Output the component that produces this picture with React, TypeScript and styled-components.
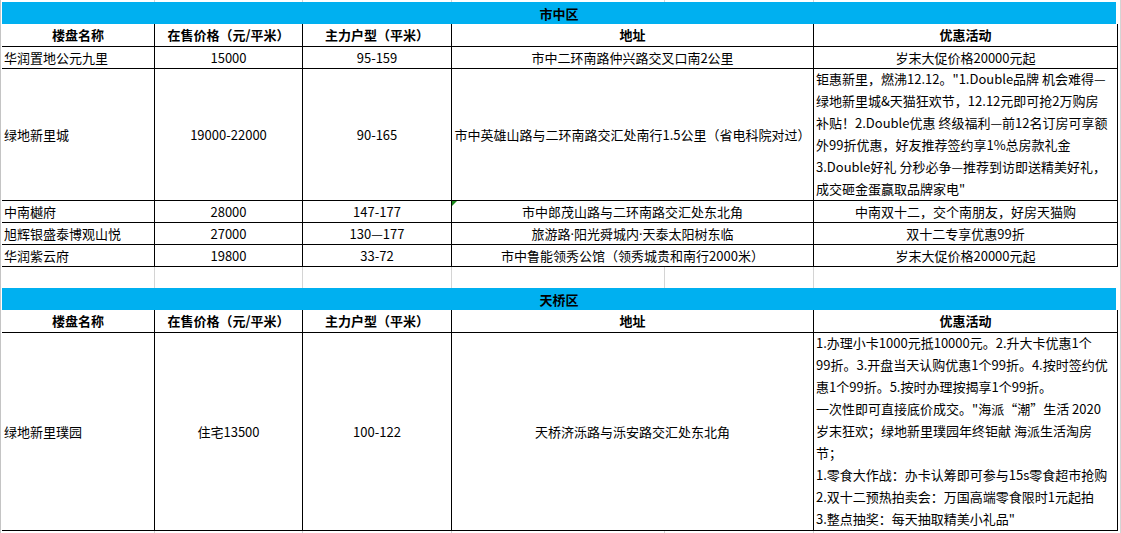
import * as React from "react";
import styled, { createGlobalStyle } from "styled-components";

const GlobalStyle = createGlobalStyle`
  html, body {
    margin: 0;
    padding: 0;
    background: #fff;
  }
  body {
    font-family: "Noto Sans CJK SC", "Noto Sans", sans-serif;
    font-size: 13px;
    color: #000;
  }
`;

type Row = {
  name: string;
  price: string;
  size: string;
  address: string;
  promo: string[];
  height: number;
  marker?: boolean;
};

const shizhong: Row[] = [
  {
    name: "华润置地公元九里",
    price: "15000",
    size: "95-159",
    address: "市中二环南路仲兴路交叉口南2公里",
    promo: ["岁末大促价格20000元起"],
    height: 22,
  },
  {
    name: "绿地新里城",
    price: "19000-22000",
    size: "90-165",
    address: "市中英雄山路与二环南路交汇处南行1.5公里（省电科院对过）",
    promo: [
      "钜惠新里，燃沸12.12。\"1.Double品牌 机会难得—",
      "绿地新里城&天猫狂欢节，12.12元即可抢2万购房",
      "补贴！2.Double优惠 终级福利—前12名订房可享额",
      "外99折优惠，好友推荐签约享1%总房款礼金",
      "3.Double好礼 分秒必争—推荐到访即送精美好礼，",
      "成交砸金蛋赢取品牌家电\"",
    ],
    height: 132,
  },
  {
    name: "中南樾府",
    price: "28000",
    size: "147-177",
    address: "市中郎茂山路与二环南路交汇处东北角",
    promo: ["中南双十二，交个南朋友，好房天猫购"],
    height: 22,
    marker: true,
  },
  {
    name: "旭辉银盛泰博观山悦",
    price: "27000",
    size: "130—177",
    address: "旅游路·阳光舜城内·天泰太阳树东临",
    promo: ["双十二专享优惠99折"],
    height: 22,
  },
  {
    name: "华润紫云府",
    price: "19800",
    size: "33-72",
    address: "市中鲁能领秀公馆（领秀城贵和南行2000米）",
    promo: ["岁末大促价格20000元起"],
    height: 22,
  },
];

const tianqiao: Row[] = [
  {
    name: "绿地新里璞园",
    price: "住宅13500",
    size: "100-122",
    address: "天桥济泺路与泺安路交汇处东北角",
    promo: [
      "1.办理小卡1000元抵10000元。2.升大卡优惠1个",
      "99折。3.开盘当天认购优惠1个99折。4.按时签约优",
      "惠1个99折。5.按时办理按揭享1个99折。",
      "一次性即可直接底价成交。\"海派“潮”生活 2020",
      "岁末狂欢；绿地新里璞园年终钜献 海派生活淘房",
      "节；",
      "1.零食大作战：办卡认筹即可参与15s零食超市抢购",
      "2.双十二预热拍卖会：万国高端零食限时1元起拍",
      "3.整点抽奖：每天抽取精美小礼品\"",
    ],
    height: 198,
  },
];

const headers = ["楼盘名称", "在售价格（元/平米）", "主力户型（平米）", "地址", "优惠活动"];

const Sheet = styled.div`
  width: 1121px;
  height: 533px;
  box-sizing: border-box;
  border-left: 1px solid #c4c4c4;
  border-right: 1px solid #d4d4d4;
  padding-left: 1px;
  overflow: hidden;
  background: #fff;
`;

const GapRow = styled.div<{ $h: number }>`
  display: grid;
  grid-template-columns: 153px 148px 149px 213px 149px 304px;
  height: ${(p) => p.$h}px;
`;

const GapCell = styled.div<{ $last?: boolean }>`
  box-sizing: border-box;
  border-right: ${(p) => (p.$last ? "none" : "1px solid #d4d4d4")};
`;

const Table = styled.div<{ $rows: string }>`
  display: grid;
  grid-template-columns: 153px 148px 149px 362px 304px;
  grid-template-rows: ${(p) => p.$rows};
`;

const Band = styled.div`
  grid-column: 1 / -1;
  margin-right: 2px;
  background: #00b0f0;
  font-weight: 700;
  display: flex;
  align-items: center;
  justify-content: center;
`;

const Cell = styled.div<{ $align?: "left" | "center"; $head?: boolean }>`
  position: relative;
  box-sizing: border-box;
  border-right: 1px solid #000;
  border-bottom: 1px solid #000;
  display: flex;
  align-items: center;
  justify-content: ${(p) => (p.$align === "left" ? "flex-start" : "center")};
  padding: 0 2px;
  white-space: nowrap;
  overflow: hidden;
  font-weight: ${(p) => (p.$head ? 700 : 400)};
  line-height: 20px;
`;

const PromoLines = styled.div`
  align-self: stretch;
  display: flex;
  flex-direction: column;
  justify-content: center;
  line-height: 22px;
  padding-bottom: 1px;
`;

// narrow latin middle dot, as in the sheet
const Dot = styled.span`
  font-family: "Noto Sans", sans-serif;
`;

const Marker = styled.span`
  position: absolute;
  top: 0;
  left: 0;
  width: 0;
  height: 0;
  border-top: 5px solid #1b8a1b;
  border-right: 5px solid transparent;
`;

function withDots(text: string) {
  const parts = text.split("·");
  return parts.map((p, i) => (
    <React.Fragment key={i}>
      {i > 0 && <Dot>·</Dot>}
      {p}
    </React.Fragment>
  ));
}

function Section({ title, rows }: { title: string; rows: Row[] }) {
  const template = ["22px", "23px", ...rows.map((r) => `${r.height}px`)].join(" ");
  return (
    <Table $rows={template}>
      <Band>{title}</Band>
      {headers.map((h) => (
        <Cell key={h} $head>
          {h}
        </Cell>
      ))}
      {rows.map((r) => (
        <React.Fragment key={r.name}>
          <Cell $align="left">{r.name}</Cell>
          <Cell>{r.price}</Cell>
          <Cell>{r.size}</Cell>
          <Cell>
            {r.marker && <Marker />}
            <span>{withDots(r.address)}</span>
          </Cell>
          {r.promo.length > 1 ? (
            <Cell $align="left">
              <PromoLines>
                {r.promo.map((line, i) => (
                  <div key={i}>{line}</div>
                ))}
              </PromoLines>
            </Cell>
          ) : (
            <Cell>{r.promo[0]}</Cell>
          )}
        </React.Fragment>
      ))}
    </Table>
  );
}

function Gap({ h }: { h: number }) {
  return (
    <GapRow $h={h}>
      {[0, 1, 2, 3, 4, 5].map((i) => (
        <GapCell key={i} $last={i === 5} />
      ))}
    </GapRow>
  );
}

export default function App() {
  return (
    <>
      <GlobalStyle />
      <Sheet>
        <Gap h={2} />
        <Section title="市中区" rows={shizhong} />
        <Gap h={21} />
        <Section title="天桥区" rows={tianqiao} />
        <Gap h={2} />
      </Sheet>
    </>
  );
}
